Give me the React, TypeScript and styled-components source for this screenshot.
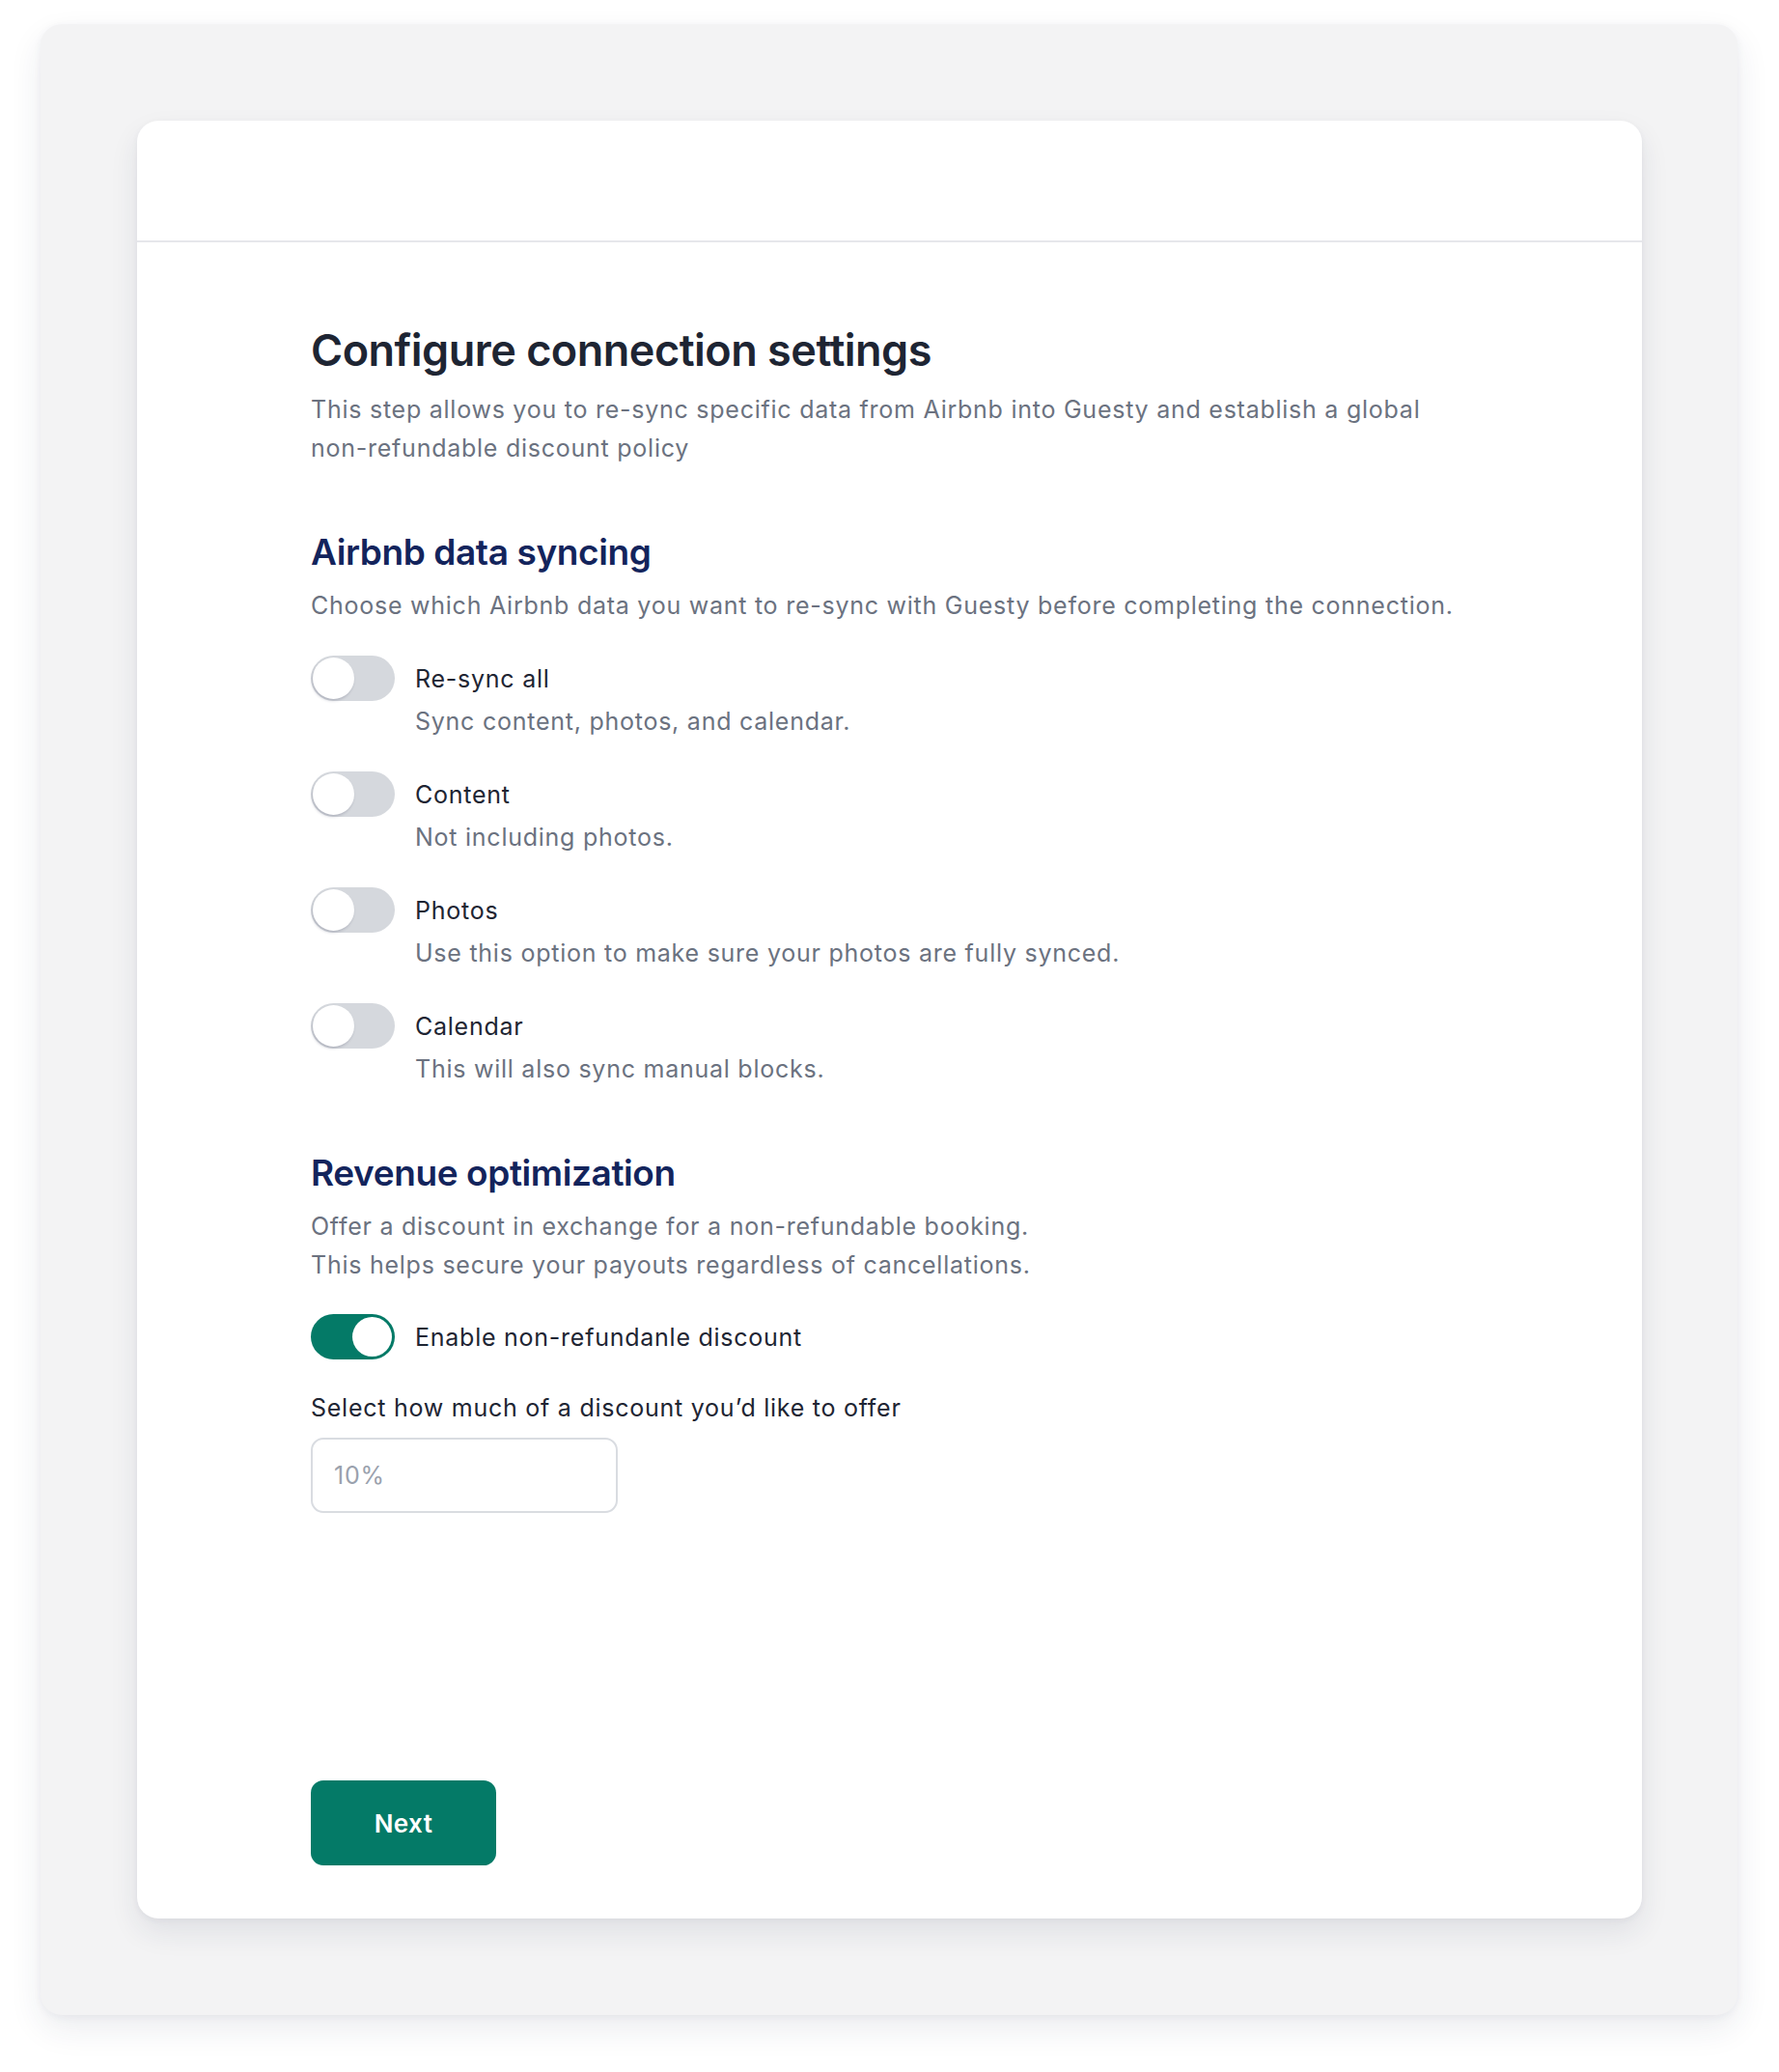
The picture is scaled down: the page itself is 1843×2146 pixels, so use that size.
import React, { useState } from "react";
import styled, { createGlobalStyle } from "styled-components";

const GlobalStyle = createGlobalStyle`
  * { box-sizing: border-box; }
  html, body { margin: 0; padding: 0; background: #ffffff; }
  body { font-family: Inter, "Noto Sans", "Liberation Sans", sans-serif; -webkit-font-smoothing: antialiased; }
`;

const Page = styled.div`
  padding: 25px 43px 59px 42px;
`;

const Frame = styled.div`
  background: #f3f3f4;
  border-radius: 22px;
  padding: 100px 99px 100px 100px;
  box-shadow: 0 14px 34px rgba(30, 41, 80, 0.09), 0 2px 8px rgba(30, 41, 80, 0.05);
`;

const Card = styled.div`
  background: #ffffff;
  border-radius: 22px;
  min-height: 1862px;
  display: flex;
  flex-direction: column;
  box-shadow: 0 14px 30px rgba(30, 41, 80, 0.09), 0 2px 6px rgba(30, 41, 80, 0.05);
`;

const CardHeader = styled.div`
  height: 126px;
  border-bottom: 2px solid #e6e7eb;
`;

const CardBody = styled.div`
  flex: 1;
  display: flex;
  flex-direction: column;
  padding: 84px 180px 55px 180px;
`;

const Title = styled.h1`
  margin: 0;
  font-size: 45px;
  line-height: 56px;
  font-weight: 600;
  letter-spacing: -0.5px;
  color: #1e2533;
`;

const SectionTitle = styled.h2`
  margin: 66px 0 0;
  font-size: 37px;
  line-height: 44px;
  font-weight: 600;
  letter-spacing: -0.4px;
  color: #13245c;
`;

const bodyType = `
  font-size: 25px;
  line-height: 40px;
  letter-spacing: 0.75px;
`;

const Text = styled.p<{ $top?: number }>`
  margin: ${(p) => p.$top ?? 13}px 0 0;
  ${bodyType}
  font-weight: 400;
  color: #6b7280;
`;

const OptionList = styled.div<{ $top: number }>`
  margin-top: ${(p) => p.$top}px;
  display: flex;
  flex-direction: column;
  gap: 32px;
`;

const Option = styled.label`
  display: flex;
  align-items: flex-start;
  gap: 21px;
  cursor: pointer;
`;

const OptionText = styled.div`
  display: flex;
  flex-direction: column;
  gap: 4px;
  padding-top: 4px;
`;

const OptionLabel = styled.span`
  ${bodyType}
  color: #1e2533;
`;

const OptionHint = styled.span`
  ${bodyType}
  color: #6b7280;
`;

const Track = styled.button<{ $on: boolean }>`
  position: relative;
  flex: none;
  width: 87px;
  height: 47px;
  border: none;
  padding: 0;
  border-radius: 999px;
  background: ${(p) => (p.$on ? "#047a67" : "#d5d8dd")};
  cursor: pointer;
`;

const Knob = styled.span<{ $on: boolean }>`
  position: absolute;
  top: ${(p) => (p.$on ? 3 : 2)}px;
  left: ${(p) => (p.$on ? 43 : 2)}px;
  width: ${(p) => (p.$on ? 41 : 43)}px;
  height: ${(p) => (p.$on ? 41 : 43)}px;
  border-radius: 50%;
  background: #ffffff;
  box-shadow: ${(p) =>
    p.$on ? "none" : "-1px 2px 3px rgba(20, 30, 60, 0.18)"};
`;

const FieldLabel = styled.div`
  margin-top: 30px;
  ${bodyType}
  color: #1e2533;
`;

const Input = styled.input`
  margin-top: 11px;
  width: 318px;
  height: 78px;
  border: 2px solid #d9dce1;
  border-radius: 13px;
  padding: 0 22px;
  font-family: inherit;
  ${bodyType}
  color: #1e2533;
  outline: none;
  &::placeholder { color: #9aa1ad; }
`;

const Footer = styled.div`
  margin-top: auto;
`;

const NextButton = styled.button`
  width: 192px;
  height: 88px;
  border: none;
  border-radius: 13px;
  background: #047a67;
  color: #ffffff;
  font-family: inherit;
  font-size: 26px;
  letter-spacing: 0.4px;
  font-weight: 600;
  cursor: pointer;
`;

type Opt = { key: string; label: string; hint?: string };

const syncOptions: Opt[] = [
  { key: "all", label: "Re-sync all", hint: "Sync content, photos, and calendar." },
  { key: "content", label: "Content", hint: "Not including photos." },
  { key: "photos", label: "Photos", hint: "Use this option to make sure your photos are fully synced." },
  { key: "calendar", label: "Calendar", hint: "This will also sync manual blocks." },
];

function Toggle({ on, onClick }: { on: boolean; onClick: () => void }) {
  return (
    <Track type="button" $on={on} onClick={onClick} aria-pressed={on}>
      <Knob $on={on} />
    </Track>
  );
}

export default function App() {
  const [state, setState] = useState<Record<string, boolean>>({
    all: false,
    content: false,
    photos: false,
    calendar: false,
    discount: true,
  });
  const flip = (k: string) => setState((s) => ({ ...s, [k]: !s[k] }));

  return (
    <>
      <GlobalStyle />
      <Page>
        <Frame>
          <Card>
            <CardHeader />
            <CardBody>
              <Title>Configure connection settings</Title>
              <Text>
                This step allows you to re-sync specific data from Airbnb into Guesty and establish a global
                <br />
                non-refundable discount policy
              </Text>

              <SectionTitle>Airbnb data syncing</SectionTitle>
              <Text>Choose which Airbnb data you want to re-sync with Guesty before completing the connection.</Text>

              <OptionList $top={32}>
                {syncOptions.map((o) => (
                  <Option key={o.key}>
                    <Toggle on={state[o.key]} onClick={() => flip(o.key)} />
                    <OptionText>
                      <OptionLabel>{o.label}</OptionLabel>
                      <OptionHint>{o.hint}</OptionHint>
                    </OptionText>
                  </Option>
                ))}
              </OptionList>

              <SectionTitle>Revenue optimization</SectionTitle>
              <Text>
                Offer a discount in exchange for a non-refundable booking.
                <br />
                This helps secure your payouts regardless of cancellations.
              </Text>

              <OptionList $top={31}>
                <Option>
                  <Toggle on={state.discount} onClick={() => flip("discount")} />
                  <OptionText>
                    <OptionLabel>Enable non-refundanle discount</OptionLabel>
                  </OptionText>
                </Option>
              </OptionList>

              <FieldLabel>Select how much of a discount you’d like to offer</FieldLabel>
              <Input placeholder="10%" />

              <Footer>
                <NextButton type="button">Next</NextButton>
              </Footer>
            </CardBody>
          </Card>
        </Frame>
      </Page>
    </>
  );
}
